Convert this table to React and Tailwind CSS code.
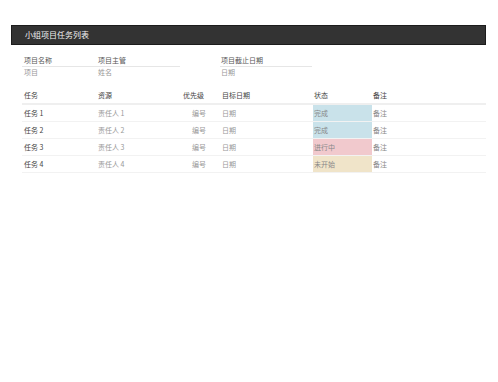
const rows = [
  { task: '任务 1', owner: '责任人 1', status: '完成', bg: 'bg-[#c9e2ea]' },
  { task: '任务 2', owner: '责任人 2', status: '完成', bg: 'bg-[#c9e2ea]' },
  { task: '任务 3', owner: '责任人 3', status: '进行中', bg: 'bg-[#f1c9cd]' },
  { task: '任务 4', owner: '责任人 4', status: '未开始', bg: 'bg-[#f0e4c9]' },
]

export default function App() {
  return (
    <div
      className="w-[498px] h-[382px] bg-white pt-[25px] pl-[11px] pr-[12px]"
      style={{ fontFamily: '"Noto Sans CJK SC", "Noto Sans", sans-serif' }}
    >
      {/* 标题栏 */}
      <div className="h-[20px] bg-[#333333] border border-[#1c1c1c] flex items-center pl-[13px]">
        <span className="text-[8px] leading-none text-[#f2f2f2]">小组项目任务列表</span>
      </div>

      <div className="pl-[11px]">
        {/* 项目信息 */}
        <div className="flex mt-[11px] text-[7px] leading-[9px]">
          <div className="w-[158px]">
            <div className="flex border-b border-[#e6e6e6] pb-[1px]">
              <div className="w-[74px] pl-[2px] text-[#555]">项目名称</div>
              <div className="pl-[2px] text-[#555]">项目主管</div>
            </div>
            <div className="flex pt-[1px]">
              <div className="w-[74px] pl-[2px] text-[#999]">项目</div>
              <div className="pl-[2px] text-[#999]">姓名</div>
            </div>
          </div>
          <div className="w-[92px] ml-[40px]">
            <div className="border-b border-[#e6e6e6] pb-[1px] pl-[1px] text-[#555]">项目截止日期</div>
            <div className="pt-[1px] pl-[1px] text-[#999]">日期</div>
          </div>
        </div>

        {/* 任务表 */}
        <div className="mt-[11px] text-[7px]">
          <div className="grid grid-cols-[74px_84px_40px_93px_59px_1fr] h-[17px] items-center border-b-2 border-[#efefef] text-[#444]">
            <div className="pl-[2px]">任务</div>
            <div className="pl-[2px]">资源</div>
            <div className="text-right pr-[16px]">优先级</div>
            <div className="pl-[2px]">目标日期</div>
            <div className="pl-[1px]">状态</div>
            <div className="pl-[1px]">备注</div>
          </div>
          {rows.map((r) => (
            <div
              key={r.task}
              className="grid grid-cols-[74px_84px_40px_93px_59px_1fr] h-[17px] border-b border-[#f2f2f2]"
            >
              <div className="pl-[2px] flex items-center text-[#444]">{r.task}</div>
              <div className="pl-[2px] flex items-center text-[#999]">{r.owner}</div>
              <div className="pr-[14px] flex items-center justify-end text-[#999]">编号</div>
              <div className="pl-[2px] flex items-center text-[#999]">日期</div>
              <div className={`pl-[1px] flex items-center text-[#888] ${r.bg}`}>{r.status}</div>
              <div className="pl-[1px] flex items-center text-[#888]">备注</div>
            </div>
          ))}
        </div>
      </div>
    </div>
  )
}
